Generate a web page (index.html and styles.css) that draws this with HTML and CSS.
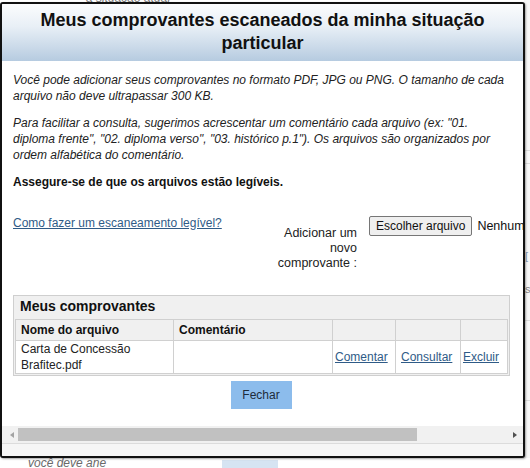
FILE: index.html
```html
<!DOCTYPE html>
<html lang="pt-BR">
<head>
<meta charset="utf-8">
<title>Meus comprovantes</title>
<link rel="stylesheet" href="styles.css">
</head>
<body>
<div class="page">
  <div class="page-top">a situação atual</div>
  <div class="page-side">
    <div class="side-line l1"></div>
    <div class="side-line l2"></div>
    <div class="side-link">[</div>
    <div class="side-s">s</div>
    <div class="side-line l3"></div>
    <div class="side-line l4"></div>
  </div>
  <div class="page-bottom">
    <span class="bottom-text">você deve ane</span>
    <span class="bottom-box"></span>
  </div>
</div>

<div class="dialog">
  <div class="dialog-header">
    <h1 class="dialog-title">Meus comprovantes escaneados da minha situação particular</h1>
  </div>
  <div class="dialog-body">
    <div class="dialog-content">
      <p class="intro">Você pode adicionar seus comprovantes no formato PDF, JPG ou PNG. O tamanho de cada arquivo não deve ultrapassar 300 KB.</p>
      <p class="intro intro-last">Para facilitar a consulta, sugerimos acrescentar um comentário cada arquivo (ex: "01. diploma frente", "02. diploma verso", "03. histórico p.1"). Os arquivos são organizados por ordem alfabética do comentário.</p>
      <p class="warn">Assegure-se de que os arquivos estão legíveis.</p>

      <div class="upload-row">
        <div class="upload-help"><a href="#" class="link">Como fazer um escaneamento legível?</a></div>
        <div class="upload-label">Adicionar um novo comprovante :</div>
        <div class="upload-input">
          <button class="file-btn" type="button">Escolher arquivo</button>
          <span class="file-none">Nenhum arquivo escolhido</span>
        </div>
      </div>

      <div class="files">
        <div class="files-title">Meus comprovantes</div>
        <table class="files-table">
          <colgroup>
            <col class="c-name"><col class="c-comment"><col class="c-a1"><col class="c-a2"><col class="c-a3">
          </colgroup>
          <thead>
            <tr><th>Nome do arquivo</th><th>Comentário</th><th></th><th></th><th></th></tr>
          </thead>
          <tbody>
            <tr>
              <td>Carta de Concessão Brafitec.pdf</td>
              <td></td>
              <td><a href="#" class="link">Comentar</a></td>
              <td><a href="#" class="link">Consultar</a></td>
              <td><a href="#" class="link">Excluir</a></td>
            </tr>
          </tbody>
        </table>
      </div>

      <div class="actions">
        <button class="close-btn" type="button">Fechar</button>
      </div>
    </div>
  </div>
  <div class="hscroll">
    <span class="arrow arrow-left"></span>
    <div class="track"><div class="thumb"></div></div>
    <span class="arrow arrow-right"></span>
  </div>
  <div class="dialog-footer"></div>
</div>
</body>
</html>
```

FILE: styles.css
```css
* { box-sizing: border-box; }

html, body {
  margin: 0;
  padding: 0;
  width: 530px;
  height: 468px;
  overflow: hidden;
}

body {
  background: #ffffff;
  font-family: "Liberation Sans", Arial, sans-serif;
  font-size: 12px;
  color: #222;
  position: relative;
}

/* background page */
.page {
  width: 530px;
  height: 468px;
  position: relative;
}

.page-top {
  position: absolute;
  left: 86px;
  top: -9px;
  font-size: 12px;
  color: #777;
  font-style: italic;
}

.page-side {
  position: absolute;
  left: 524px;
  top: 0;
  width: 6px;
  height: 468px;
  background: #f7f7f7;
}

.side-line {
  position: absolute;
  left: 0;
  width: 6px;
  height: 1px;
  background: #dcdcdc;
}
.l1 { top: 150px; }
.l2 { top: 163px; }
.l3 { top: 320px; }
.l4 { top: 400px; }

.side-link {
  position: absolute;
  left: 1px;
  top: 250px;
  font-size: 11px;
  color: #8aa0b8;
}
.side-s {
  position: absolute;
  left: 1px;
  top: 283px;
  font-size: 11px;
  color: #888;
}

.page-bottom {
  position: absolute;
  left: 0;
  top: 458px;
  width: 530px;
  height: 10px;
  background: #fff;
}

.bottom-text {
  position: absolute;
  left: 28px;
  top: -2px;
  font-size: 12px;
  line-height: 14px;
  font-style: italic;
  color: #6a6a6a;
}

.bottom-box {
  position: absolute;
  left: 222px;
  top: 2px;
  width: 56px;
  height: 8px;
  background: #d6e4f2;
}

/* dialog */
.dialog {
  position: absolute;
  left: 0;
  top: 2px;
  width: 525px;
  height: 456px;
  border: 2px solid #111;
  border-radius: 3px;
  background: #fff;
  display: flex;
  flex-direction: column;
  overflow: hidden;
  box-shadow: 1px 1px 2px rgba(0,0,0,0.35);
}

.dialog-header {
  height: 57px;
  flex: none;
  background: linear-gradient(to bottom, #fbfcfd 0%, #e8eff6 40%, #b6cbe0 100%);
  padding: 5px 8px 0;
}

.dialog-title {
  margin: 0;
  text-align: center;
  font-size: 18px;
  line-height: 23px;
  font-weight: bold;
  color: #111;
}

.dialog-body {
  flex: 1 1 auto;
  min-height: 0;
  overflow: hidden;
  position: relative;
}

.dialog-content {
  width: 521px;
  padding: 12px 10px 0 11px;
}

.intro {
  margin: 0 0 12px;
  font-style: italic;
  line-height: 15.7px;
  color: #222;
}

.intro-last {
  margin-bottom: 10px;
}

.warn {
  margin: 0;
  font-weight: bold;
  line-height: 16px;
  color: #111;
}

.link {
  color: #2f5b87;
  text-decoration: underline;
}

.upload-row {
  display: flex;
  align-items: flex-start;
  white-space: nowrap;
  margin-top: 25px;
}

.upload-help {
  flex: none;
  width: 262px;
  line-height: 16px;
}

.upload-label {
  flex: none;
  width: 82px;
  white-space: normal;
  text-align: right;
  line-height: 15px;
  padding-top: 11px;
  color: #222;
  font-size: 12.5px;
}

.upload-input {
  flex: none;
  margin-left: 12px;
  margin-top: 1px;
  display: flex;
  align-items: center;
  gap: 5px;
  font-size: 12.5px;
}

.file-btn {
  font-family: "Liberation Sans", Arial, sans-serif;
  font-size: 12px;
  height: 20px;
  padding: 0 6px;
  background: #efefef;
  border: 1px solid #767676;
  border-radius: 2px;
  color: #111;
}

.file-none {
  color: #111;
}

.files {
  margin-top: 24px;
  width: 497px;
  border: 1px solid #cfcfcf;
  background: #f0f0f0;
  padding: 0 2px 1px 1px;
}

.files-title {
  height: 23px;
  padding-left: 5px;
  line-height: 21px;
  font-size: 14px;
  font-weight: bold;
  color: #111;
}

.files-table {
  width: 492px;
  border-collapse: collapse;
  table-layout: fixed;
  background: #fff;
}

.c-name { width: 158px; }
.c-comment { width: 159px; }
.c-a1 { width: 63px; }
.c-a2 { width: 65px; }
.c-a3 { width: 47px; }

.files-table th,
.files-table td {
  border: 1px solid #d0d0d0;
  padding: 0 3px 0 5px;
  text-align: left;
  font-size: 12px;
  line-height: 16px;
  color: #222;
}

.files-table th {
  height: 21px;
  background: #f0f0f0;
  font-weight: bold;
  color: #111;
}

.files-table td {
  height: 33px;
  vertical-align: middle;
  white-space: nowrap;
}

.files-table td:first-child {
  white-space: normal;
}

.files-table td:nth-child(3),
.files-table td:nth-child(5) {
  padding-left: 2px;
}

.files-table td:nth-child(4) {
  padding-left: 5px;
}

.actions {
  display: flex;
  justify-content: center;
  margin-top: 5px;
  padding-right: 4px;
}

.close-btn {
  width: 61px;
  height: 28px;
  border: none;
  background: #8cbcec;
  color: #1d2b3a;
  font-family: "Liberation Sans", Arial, sans-serif;
  font-size: 12px;
}

/* horizontal scrollbar */
.hscroll {
  flex: none;
  height: 18px;
  background: #f1f1f1;
  display: flex;
  align-items: center;
  border-bottom: 1px solid #dcdcdc;
}

.arrow {
  width: 16px;
  height: 18px;
  position: relative;
  flex: none;
}

.arrow-left::after,
.arrow-right::after {
  content: "";
  position: absolute;
  top: 6px;
  width: 0;
  height: 0;
  border-top: 3.5px solid transparent;
  border-bottom: 3.5px solid transparent;
}

.arrow-left::after {
  left: 8px;
  border-right: 4px solid #a3a3a3;
}

.arrow-right::after {
  left: 6px;
  border-left: 4px solid #505050;
}

.track {
  flex: 1;
  height: 18px;
  display: flex;
  align-items: center;
}

.thumb {
  width: 399px;
  height: 13px;
  background: #c1c1c1;
}

.dialog-footer {
  flex: none;
  height: 12px;
  background: #f6f6f6;
}
```
